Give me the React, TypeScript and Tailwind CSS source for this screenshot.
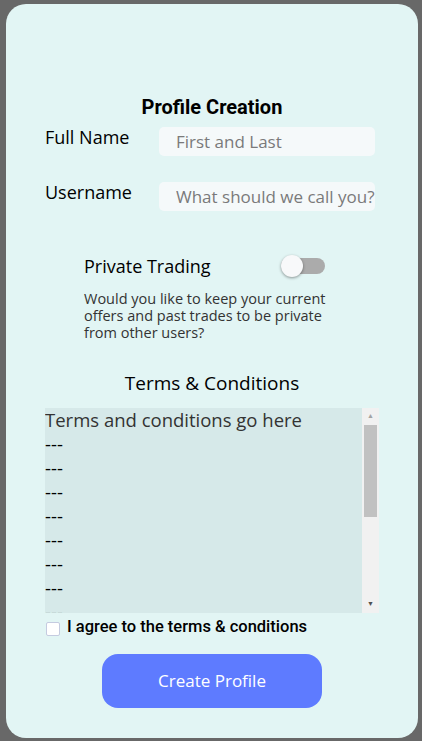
import React from "react";

const seg = "font-['Segoe_UI','Open_Sans','Noto_Sans',sans-serif]";

const lines = Array.from({ length: 8 });

export default function App() {
  return (
    <div className="h-[741px] w-[422px] bg-[#686868] pt-[4px] pl-[6px]">
      <div className={`h-[734px] w-[412px] rounded-[20px] bg-[#e2f5f4] text-black ${seg}`}>
        <h1 className="pt-[90px] text-center font-['Roboto',sans-serif] text-[20px] font-bold leading-[26px]">
          Profile Creation
        </h1>

        <div className="mt-[7px] flex items-start pl-[39px]">
          <label className="w-[114px] text-[18px] leading-[20px]">Full Name</label>
          <input
            placeholder="First and Last"
            className="h-[29px] w-[216px] rounded-[5px] bg-[#f5f9fa] px-[17px] text-[17px] placeholder:text-[#7a7a7a] outline-none"
          />
        </div>

        <div className="mt-[26px] flex items-start pl-[39px]">
          <label className="w-[114px] text-[18px] leading-[20px]">Username</label>
          <input
            placeholder="What should we call you?"
            className="h-[29px] w-[216px] rounded-[5px] bg-[#f5f9fa] pl-[17px] pr-0 text-[17px] placeholder:text-[#7a7a7a] outline-none"
          />
        </div>

        <div className="mt-[44px] pl-[78px]">
          <div className="flex items-center">
            <span className="w-[197px] text-[18px] leading-[22px]">Private Trading</span>
            <div className="relative h-[16px] w-[44px] rounded-full bg-[#ababab]">
              <div className="absolute left-0 top-[-3px] h-[22px] w-[22px] rounded-full bg-[#f8f9fa] shadow-[0_1px_3px_rgba(0,0,0,0.4)]" />
            </div>
          </div>
          <p className="mt-[13px] w-[270px] text-[14.5px] leading-[17px] text-[#333]">
            Would you like to keep your current offers and past trades to be private from other users?
          </p>
        </div>

        <h2 className="mt-[30px] text-center text-[19px] leading-[24px]">Terms &amp; Conditions</h2>

        <div className="mt-[13px] ml-[39px] flex h-[205px] w-[334px]">
          <div className="h-full flex-1 overflow-hidden bg-[#d6e9e9] text-[18.5px] leading-[24px] text-[#333]">
            <div>Terms and conditions go here</div>
            {lines.map((_, i) => (
              <div key={i} className="text-black">---</div>
            ))}
          </div>
          <div className="flex h-full w-[17px] flex-col items-center bg-[#f1f1f1]">
            <div className="flex h-[17px] items-center justify-center text-[7px] text-[#a3a3a3]">▲</div>
            <div className="h-[92px] w-[13px] bg-[#c1c1c1]" />
            <div className="flex-1" />
            <div className="flex h-[17px] items-center justify-center text-[7px] text-[#505050]">▼</div>
          </div>
        </div>

        <div className="mt-[4px] flex items-center pl-[40px]">
          <input type="checkbox" className="mt-[4px] h-[14px] w-[14px] appearance-none rounded-[2px] border border-[#c5cbe0] bg-white" />
          <span className="ml-[7px] font-['Roboto',sans-serif] text-[16.5px] font-medium leading-[20px]">
            I agree to the terms &amp; conditions
          </span>
        </div>

        <div className="mt-[17px] flex justify-center">
          <button className="h-[54px] w-[220px] rounded-[16px] bg-[#5e7bff] text-[17px] text-white">
            Create Profile
          </button>
        </div>
      </div>
    </div>
  );
}
